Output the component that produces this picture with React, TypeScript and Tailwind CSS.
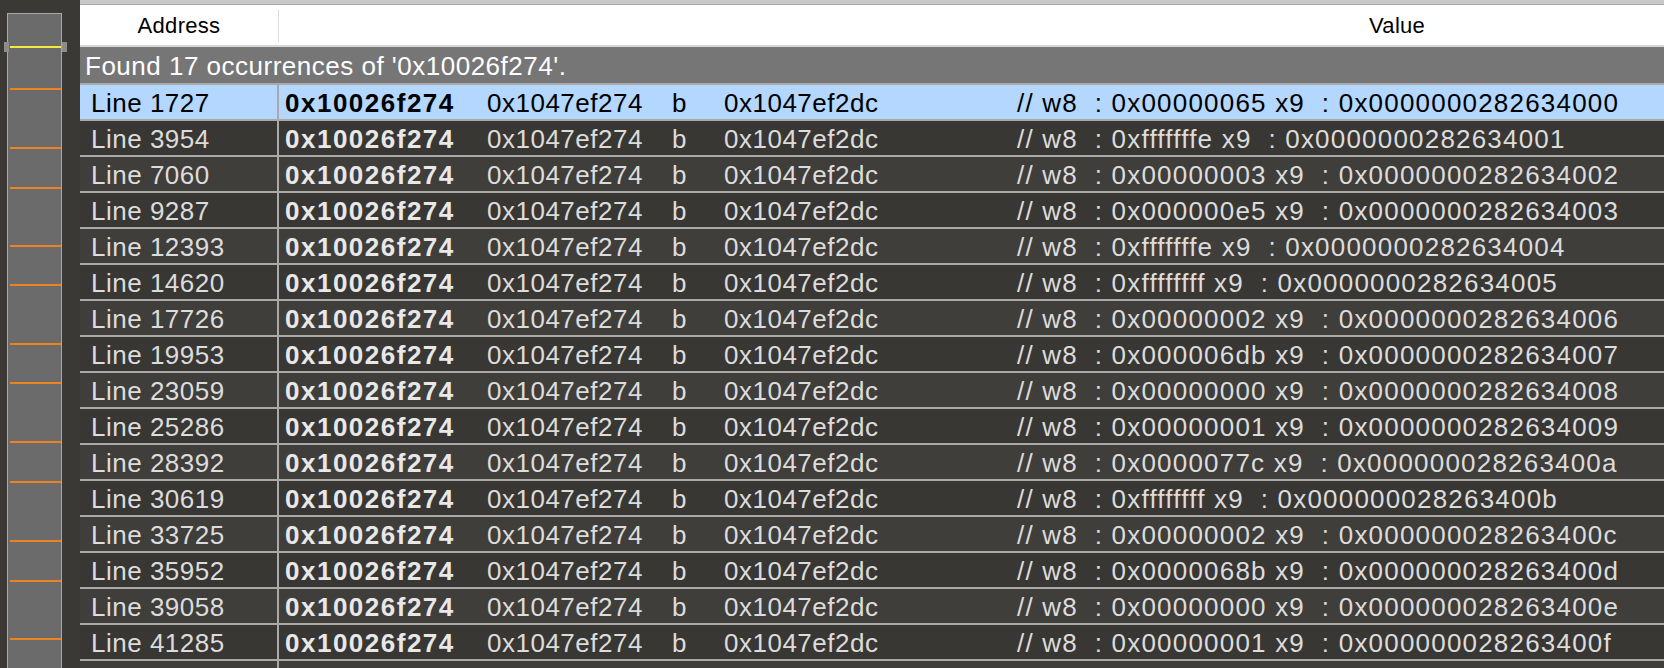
import React from "react";

const rows: [string, string, string][] = [
  ["1727", "0x00000065", "0x0000000282634000"],
  ["3954", "0xfffffffe", "0x0000000282634001"],
  ["7060", "0x00000003", "0x0000000282634002"],
  ["9287", "0x000000e5", "0x0000000282634003"],
  ["12393", "0xfffffffe", "0x0000000282634004"],
  ["14620", "0xffffffff", "0x0000000282634005"],
  ["17726", "0x00000002", "0x0000000282634006"],
  ["19953", "0x000006db", "0x0000000282634007"],
  ["23059", "0x00000000", "0x0000000282634008"],
  ["25286", "0x00000001", "0x0000000282634009"],
  ["28392", "0x0000077c", "0x000000028263400a"],
  ["30619", "0xffffffff", "0x000000028263400b"],
  ["33725", "0x00000002", "0x000000028263400c"],
  ["35952", "0x0000068b", "0x000000028263400d"],
  ["39058", "0x00000000", "0x000000028263400e"],
  ["41285", "0x00000001", "0x000000028263400f"],
  ["43512", "0x00000000", "0x0000000282634010"],
];

const markers = [88, 147, 187, 245, 284, 343, 382, 441, 481, 540, 580, 638];

export default function App() {
  return (
    <div
      className="flex w-[1664px] h-[668px] overflow-hidden bg-[#3b3936]"
      style={{ fontFamily: '"Liberation Sans", Arial, sans-serif' }}
    >
      {/* minimap sidebar */}
      <div className="w-[80px] shrink-0 bg-[#3b3936] h-full">
        <div className="relative ml-[7px] mt-[13px] w-[55px] h-[700px] bg-[#6b6b6b] border border-[#a9a9a9]">
          <div className="absolute left-[-4px] top-[28px] w-[5px] h-[10px] bg-[#8c8c8c]" />
          <div className="absolute right-[-6px] top-[28px] w-[5px] h-[10px] bg-[#8c8c8c]" />
          <div className="absolute left-[2px] right-[0px] top-[32px] h-[2px] bg-[#f2ea3c]" />
          {markers.map((m) => (
            <div
              key={m}
              className="absolute left-[2px] right-[0px] h-[2px] bg-[#ec8520]"
              style={{ top: m - 14 }}
            />
          ))}
        </div>
      </div>

      {/* main table */}
      <div className="flex-1 flex flex-col min-w-0">
        <div className="h-[5px] shrink-0 bg-[#c8c8c8] border-b border-[#a8a8a8]" />
        <div className="h-[40px] shrink-0 bg-white flex items-center text-[22px] text-black tracking-[0.3px] border-b-2 border-[#d8d8d8] box-content">
          <div className="w-[198px] text-center">Address</div>
          <div className="w-px h-[32px] self-start mt-[5px] bg-[#dcdcdc]" />
          <div className="flex-1 pl-[1090px]">Value</div>
        </div>
        <div className="h-[34px] shrink-0 bg-[#767676] text-white text-[26px] tracking-[0.5px] flex items-center pl-[5px] pt-[2px] border-b-2 border-[#a9a9a9] box-content">
          Found 17 occurrences of '0x10026f274'.
        </div>
        {rows.map(([line, w8, x9], i) => {
          const sel = i === 0;
          const bg = sel ? "bg-[#b3d7ff]" : i % 2 === 1 ? "bg-[#393734]" : "bg-[#403e3b]";
          const txt = sel ? "text-black" : "text-[#dcdcdc]";
          return (
            <div
              key={line}
              className={`h-[34px] shrink-0 flex border-b-2 border-[#a9a9a9] box-content text-[26px] tracking-[0.5px] whitespace-pre ${bg} ${txt}`}
            >
              <div className="w-[199px] shrink-0 border-r-2 border-[#a9a9a9] flex items-center pl-[11px] pt-[3px]">
                Line {line}
              </div>
              <div className="flex-1 flex items-center pl-[6px] pt-[3px]">
                <span className={`w-[202px] shrink-0 font-bold tracking-[1.5px] ${sel ? "text-black" : "text-[#e8e8e8]"}`}>
                  0x10026f274
                </span>
                <span className="w-[185px] shrink-0">0x1047ef274</span>
                <span className="w-[52px] shrink-0">b</span>
                <span className="w-[293px] shrink-0">0x1047ef2dc</span>
                <span className="tracking-[1.2px]">{`// w8  : ${w8} x9  : ${x9}`}</span>
              </div>
            </div>
          );
        })}
      </div>
    </div>
  );
}
